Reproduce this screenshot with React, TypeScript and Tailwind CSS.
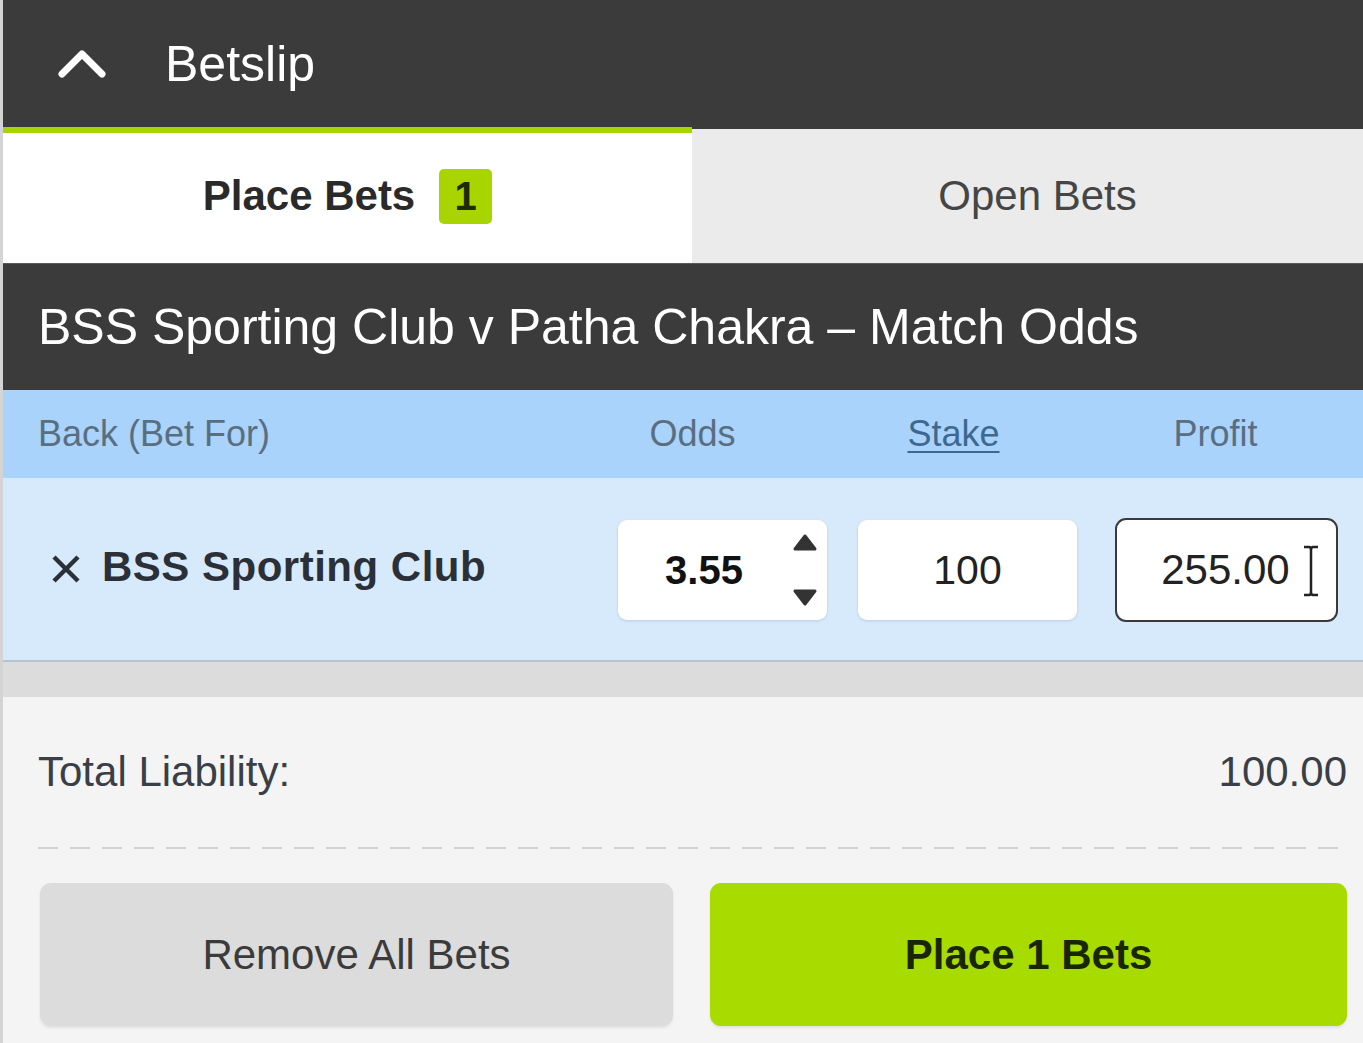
import React from "react";

function Chevron() {
  return (
    <svg width="50" height="34" viewBox="0 0 50 34" fill="none">
      <path d="M5 27 L25 7 L45 27" stroke="#ffffff" strokeWidth="7" strokeLinecap="round" strokeLinejoin="round" />
    </svg>
  );
}

function Spinner() {
  return (
    <div className="flex flex-col items-center justify-between h-[74px] w-[30px]">
      <svg width="26" height="20" viewBox="0 0 26 20">
        <path d="M13 3 L23 16 L3 16 Z" fill="#333333" stroke="#333333" strokeWidth="3" strokeLinejoin="round" />
      </svg>
      <svg width="26" height="20" viewBox="0 0 26 20">
        <path d="M3 4 L23 4 L13 17 Z" fill="#333333" stroke="#333333" strokeWidth="3" strokeLinejoin="round" />
      </svg>
    </div>
  );
}

function IBeam() {
  return (
    <svg width="18" height="52" viewBox="0 0 18 52" fill="none">
      <path d="M2 2 H7 Q9 2 9 5 V47 Q9 50 7 50 H2 M16 2 H11 Q9 2 9 5 M9 47 Q9 50 11 50 H16" stroke="#222222" strokeWidth="2.5" />
    </svg>
  );
}

export default function App() {
  return (
    <div className="w-[1363px] h-[1043px] overflow-hidden flex flex-col border-l-[3px] border-[#d4d4d4] bg-[#f4f4f4] font-[family-name:Liberation_Sans,Arial,sans-serif]">
      {/* Header */}
      <div className="h-[127px] shrink-0 bg-[#3b3b3b] flex items-center pl-[54px]">
        <Chevron />
        <span className="ml-[58px] text-[50px] leading-none text-white">Betslip</span>
      </div>

      {/* Tabs */}
      <div className="h-[136px] shrink-0 flex">
        <div className="w-[689px] bg-white border-t-[6px] border-[#a6d400] flex items-center justify-center gap-[24px] pb-[4px]">
          <span className="text-[42px] font-bold text-[#2a2a2a] leading-none">Place Bets</span>
          <span className="w-[53px] h-[55px] rounded-[5px] bg-[#a8d400] flex items-center justify-center text-[40px] font-bold text-[#1e2a00] leading-none">1</span>
        </div>
        <div className="flex-1 bg-[#ebebeb] border-t-[2px] border-[#3b3b3b] flex items-center justify-center pl-[20px]">
          <span className="text-[42px] text-[#454545] leading-none">Open Bets</span>
        </div>
      </div>

      {/* Market title */}
      <div className="h-[127px] shrink-0 bg-[#3b3b3b] border-t border-[#5a5a5a] flex items-center pl-[35px]">
        <span className="text-[50px] text-white leading-none whitespace-nowrap">BSS Sporting Club v Patha Chakra – Match Odds</span>
      </div>

      {/* Column header */}
      <div className="h-[88px] shrink-0 bg-[#a9d3fa] flex items-center pl-[35px] pr-[25px] text-[36px] leading-none text-[#5a6e82]">
        <div className="w-[580px]">Back (Bet For)</div>
        <div className="w-[209px] flex justify-center pr-[60px]">Odds</div>
        <div className="w-[31px]" />
        <div className="w-[219px] flex justify-center pr-[28px]">
          <span className="underline underline-offset-[5px] decoration-2 text-[#3d6890]">Stake</span>
        </div>
        <div className="w-[38px]" />
        <div className="w-[223px] flex justify-center pr-[22px]">Profit</div>
      </div>

      {/* Selection row */}
      <div className="h-[184px] shrink-0 bg-[#d6eafc] border-b-2 border-[#b7c4d0] flex items-center pl-[47px] pr-[25px]">
        <div className="w-[568px] flex items-center">
          <svg width="32" height="32" viewBox="0 0 32 32">
            <path d="M4 4 L28 28 M28 4 L4 28" stroke="#2b3038" strokeWidth="4.5" />
          </svg>
          <span className="ml-[20px] text-[42px] font-bold text-[#2b3038] leading-none tracking-[0.5px] mb-[4px]">BSS Sporting Club</span>
        </div>
        <div className="w-[209px] h-[100px] bg-white rounded-[9px] shadow-[0_1px_3px_rgba(0,0,0,0.12)] flex items-center pr-[7px] mt-[2px]">
          <div className="flex-1 flex justify-center text-[40px] font-bold text-[#111111] leading-none">3.55</div>
          <Spinner />
        </div>
        <div className="w-[31px]" />
        <div className="w-[219px] h-[100px] bg-white rounded-[9px] shadow-[0_1px_3px_rgba(0,0,0,0.12)] flex items-center justify-center text-[41px] text-[#222222] leading-none mt-[2px]">
          100
        </div>
        <div className="w-[38px]" />
        <div className="relative w-[223px] h-[104px] bg-white rounded-[11px] border-2 border-[#3a3a3a] flex items-center justify-center text-[42px] text-[#222222] leading-none mt-[2px]">
          <span className="mr-[2px]">255.00</span>
          <div className="absolute left-[185px] top-[25px]">
            <IBeam />
          </div>
        </div>
      </div>

      {/* Grey strip */}
      <div className="h-[35px] shrink-0 bg-[#dcdcdc]" />

      {/* Bottom */}
      <div className="flex-1 bg-[#f4f4f4] px-[35px] pr-[16px] flex flex-col">
        <div className="h-[150px] flex items-center justify-between text-[42px] text-[#3a3f47] leading-none">
          <span>Total Liability:</span>
          <span>100.00</span>
        </div>
        <div className="h-[2px] bg-[linear-gradient(to_right,#d2d2d2_0px,#d2d2d2_20px,transparent_20px)] bg-[length:32px_2px] bg-repeat-x" />
        <div className="pt-[34px] flex gap-[37px] pl-[2px]">
          <div className="w-[633px] h-[143px] rounded-[11px] bg-[#dcdcdc] shadow-[0_2px_3px_rgba(0,0,0,0.08)] flex items-center justify-center text-[42px] text-[#3b3b3b] leading-none">
            Remove All Bets
          </div>
          <div className="flex-1 h-[143px] rounded-[11px] bg-[#a8dc00] shadow-[0_2px_3px_rgba(0,0,0,0.08)] flex items-center justify-center text-[42px] font-bold text-[#1a2600] leading-none">
            Place 1 Bets
          </div>
        </div>
      </div>
    </div>
  );
}
